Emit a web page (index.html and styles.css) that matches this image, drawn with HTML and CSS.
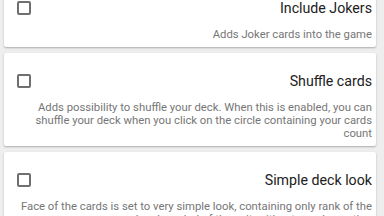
FILE: index.html
```html
<!DOCTYPE html>
<html lang="en">
<head>
<meta charset="UTF-8" />
<meta name="viewport" content="width=device-width, initial-scale=1" />
<title>Settings</title>
<link rel="stylesheet" href="styles.css">
</head>
<body>

<div class="settings-list">
  <section class="setting-card">
    <div class="setting-head">
      <span class="check"></span>
      <div class="setting-title">Include Jokers</div>
    </div>
    <div class="setting-desc">Adds Joker cards into the game</div>
  </section>

  <section class="setting-card">
    <div class="setting-head">
      <span class="check"></span>
      <div class="setting-title">Shuffle cards</div>
    </div>
    <div class="setting-desc">Adds possibility to shuffle your deck. When this is enabled, you can shuffle your deck when you click on the circle containing your cards count</div>
  </section>

  <section class="setting-card">
    <div class="setting-head">
      <span class="check"></span>
      <div class="setting-title">Simple deck look</div>
    </div>
    <div class="setting-desc">Face of the cards is set to very simple look, containing only rank of the card and symbol of the suit, without any decoration</div>
  </section>
</div>

</body>
</html>
```

FILE: styles.css
```css
* { box-sizing: border-box; margin:0; padding:0; }
html, body { height:100%; overflow:hidden; }
body {
  background:#eeeeee;
  font-family: Roboto, "Noto Sans", sans-serif;
}
.settings-list {
  display:flex;
  flex-direction:column;
  gap:6px;
  margin-top:-20px;
  padding:0 8px 0 4px;
}
.setting-card {
  background:#fff;
  border-radius:2px;
  box-shadow:0 1px 2px rgba(0,0,0,0.28);
  padding:18px 4px 6px 13px;
}
.setting-head {
  display:flex;
  justify-content:space-between;
  align-items:center;
  height:20px;
}
.check {
  width:14px; height:14px;
  border:2px solid #6f6f6f;
  border-radius:2px;
}
.setting-title {
  font-size:14.2px;
  color:#212121;
  line-height:20px;
}
.setting-desc {
  margin-top:10px;
  font-size:11.3px;
  line-height:13px;
  color:#767676;
  text-align:right;
}
```
